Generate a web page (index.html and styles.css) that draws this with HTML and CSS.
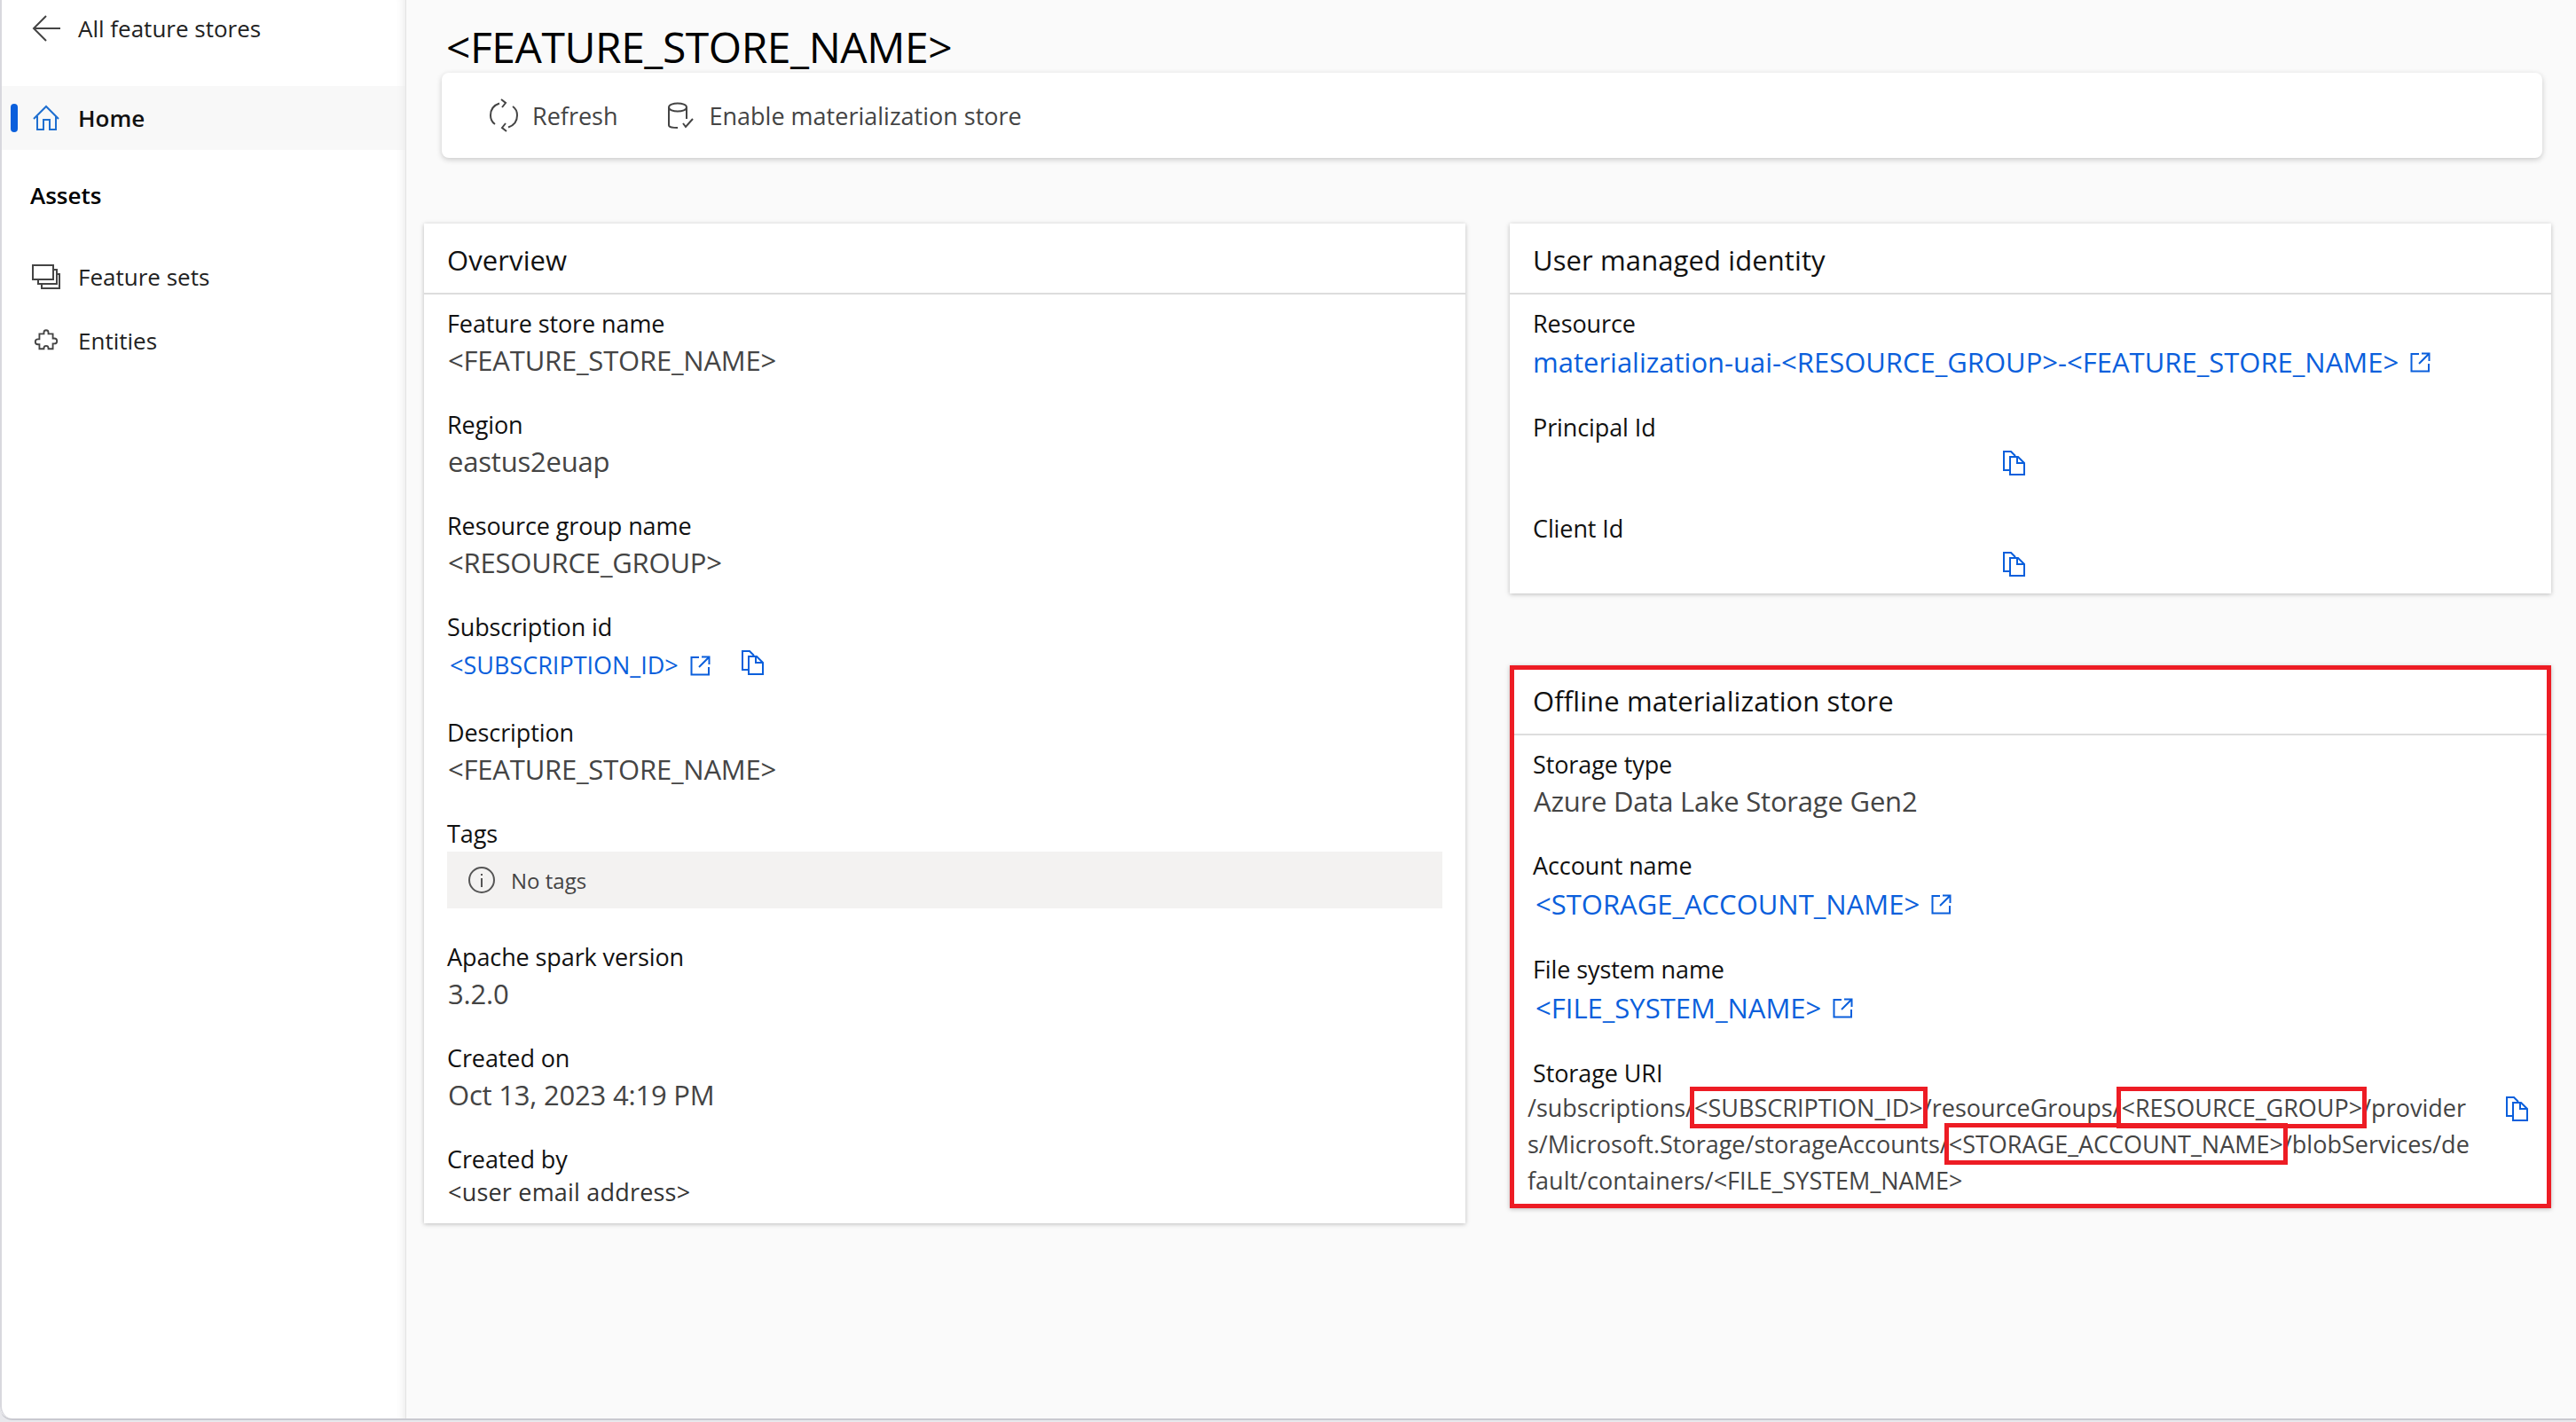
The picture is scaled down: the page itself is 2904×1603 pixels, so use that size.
FILE: index.html
```html
<!DOCTYPE html>
<html lang="en">
<head>
<meta charset="utf-8">
<title>Feature store</title>
<link rel="stylesheet" href="styles.css">
</head>
<body>
<svg class="defs" width="0" height="0" aria-hidden="true">
  <symbol id="ext" viewBox="0 0 23 23"><path d="M10 2H1.500v19.500H21V13M13 1.500h8.500V10M21 2 10 13" fill="none" stroke="currentColor" stroke-width="2"/></symbol>
  <symbol id="copy" viewBox="0 0 25 28"><path d="M7 22H1V1h8l5 5M8 7h9l7 7v13H8zM16 7v7h8" fill="none" stroke="currentColor" stroke-width="2"/></symbol>
</svg>
<div class="window">
<aside class="sidebar">
  <div class="nav-back">
    <svg class="nav-icon" viewBox="0 0 32 30"><path d="M32 15H2M16 1 2 15l14 14" fill="none" stroke="#444" stroke-width="2"/></svg>
    <span>All feature stores</span>
  </div>
  <div class="nav-item active">
    <svg class="nav-icon" viewBox="0 0 32 30"><path d="M2 16 16 2l14 14M6 13v15h7V17h7v11h7V13" fill="none" stroke="#1f6fd0" stroke-width="2"/></svg>
    <span>Home</span>
  </div>
  <div class="nav-heading">Assets</div>
  <div class="nav-item first">
    <svg class="nav-icon" viewBox="0 0 32 28"><path d="M1 1h23v16H1zM24 6h4v16H7v-5M28 11h3v16H11v-5" fill="none" stroke="#444" stroke-width="2"/></svg>
    <span>Feature sets</span>
  </div>
  <div class="nav-item">
    <svg class="nav-icon" viewBox="-3 -1 38 34"><path d="M13 5a3 3 0 0 1 6 0v2h6v6h2a3.500 3.500 0 0 1 0 7h-2v7h-6v-1a3 3 0 0 0-6 0v1H7v-6H5a3.500 3.500 0 0 1 0-7h2V7h6z" fill="none" stroke="#444" stroke-width="2.200"/></svg>
    <span>Entities</span>
  </div>
</aside>
<main class="main">
  <h1 class="title">&lt;FEATURE_STORE_NAME&gt;</h1>
  <div class="toolbar">
    <div class="tool">
      <svg class="tool-refresh" viewBox="0 0 34 38"><path d="M12 5.500C6 7.500 2 12.500 2 19c0 4 2 8 5 10M22 32.500c6-2 10-7 10-13.500 0-4-2-8-5-10M14 1l5 4-4 5M20 37l-5-4 4-5" fill="none" stroke="#444" stroke-width="2"/></svg>
      <span>Refresh</span>
    </div>
    <div class="tool">
      <svg class="tool-db" viewBox="0 0 33 30"><path d="M2 6c0-6 20-6 20 0s-20 6-20 0v20c0 3 5 3 10 3M22 6v13M18 24l3 4 8-9" fill="none" stroke="#444" stroke-width="2"/></svg>
      <span>Enable materialization store</span>
    </div>
  </div>
  <div class="columns">
    <section class="card">
      <h2 class="card-title">Overview</h2>
      <div class="card-body">
        <div class="field"><div class="label">Feature store name</div><div class="value">&lt;FEATURE_STORE_NAME&gt;</div></div>
        <div class="field"><div class="label">Region</div><div class="value">eastus2euap</div></div>
        <div class="field"><div class="label">Resource group name</div><div class="value">&lt;RESOURCE_GROUP&gt;</div></div>
        <div class="field sub"><div class="label">Subscription id</div>
          <div class="value linked"><a class="link small nudge">&lt;SUBSCRIPTION_ID&gt;</a><svg class="ext"><use href="#ext"/></svg><svg class="copy sub-copy"><use href="#copy"/></svg></div></div>
        <div class="field"><div class="label">Description</div><div class="value">&lt;FEATURE_STORE_NAME&gt;</div></div>
        <div class="field tags"><div class="label">Tags</div>
          <div class="tagbox"><svg class="info" viewBox="0 0 30 30"><circle cx="15" cy="15" r="14" fill="none" stroke="#555" stroke-width="2"/><path d="M15 8v2M15 13v10" stroke="#555" stroke-width="2"/></svg><span>No tags</span></div></div>
        <div class="field"><div class="label">Apache spark version</div><div class="value">3.2.0</div></div>
        <div class="field"><div class="label">Created on</div><div class="value">Oct 13, 2023 4:19 PM</div></div>
        <div class="field last"><div class="label">Created by</div><div class="value small-value">&lt;user email address&gt;</div></div>
      </div>
    </section>
    <div class="stack">
      <section class="card">
        <h2 class="card-title">User managed identity</h2>
        <div class="card-body">
          <div class="field link-field"><div class="label">Resource</div><div class="value linked"><a class="link">materialization-uai-&lt;RESOURCE_GROUP&gt;-&lt;FEATURE_STORE_NAME&gt;</a><svg class="ext"><use href="#ext"/></svg></div></div>
          <div class="field id-field"><div class="label">Principal Id</div><div class="id-row"><svg class="copy"><use href="#copy"/></svg></div></div>
          <div class="field id-field last"><div class="label">Client Id</div><div class="id-row"><svg class="copy"><use href="#copy"/></svg></div></div>
        </div>
      </section>
      <section class="card flagged">
        <h2 class="card-title">Offline materialization store</h2>
        <div class="card-body">
          <div class="field"><div class="label">Storage type</div><div class="value">Azure Data Lake Storage Gen2</div></div>
          <div class="field link-field"><div class="label">Account name</div><div class="value linked"><a class="link nudge">&lt;STORAGE_ACCOUNT_NAME&gt;</a><svg class="ext"><use href="#ext"/></svg></div></div>
          <div class="field link-field"><div class="label">File system name</div><div class="value linked"><a class="link nudge">&lt;FILE_SYSTEM_NAME&gt;</a><svg class="ext"><use href="#ext"/></svg></div></div>
          <div class="field last"><div class="label">Storage URI</div>
            <div class="uri-row">
              <div class="uri">/subscriptions/<span class="mark">&lt;SUBSCRIPTION_ID&gt;</span>/resourceGroups/<span class="mark">&lt;RESOURCE_GROUP&gt;</span>/provider<br>s/Microsoft.Storage/storageAccounts/<span class="mark">&lt;STORAGE_ACCOUNT_NAME&gt;</span>/blobServices/de<br>fault/containers/&lt;FILE_SYSTEM_NAME&gt;</div>
              <svg class="copy"><use href="#copy"/></svg>
            </div>
          </div>
        </div>
      </section>
    </div>
  </div>
</main>
</div>
</body>
</html>
```
FILE: styles.css
```css
* { box-sizing: border-box; }
html, body { height: 100%; }
body {
  margin: 0;
  height: 1603px;
  overflow: hidden;
  background: #e8e8ec;
  font-family: "Open Sans", "Noto Sans", sans-serif;
  color: #111;
}
.defs { position: absolute; }
.window {
  display: flex;
  height: 1601px;
  background: #fafafa;
  border-bottom: 2px solid #c9c9d0;
  border-bottom-left-radius: 14px;
  overflow: hidden;
}
.sidebar {
  width: 458px;
  flex: none;
  background: #fff;
  border-left: 2px solid #d8d8de;
  border-right: 1px solid #e4e4e4;
  border-bottom-left-radius: 14px;
  box-shadow: inset -12px 0 12px -12px rgba(0,0,0,.12);
  font-size: 26px;
}
.nav-back { height: 64px; display: flex; align-items: center; padding-left: 34px; gap: 20px; color: #222; }
.nav-icon { width: 32px; height: 30px; flex: none; }
.nav-item { height: 72px; display: flex; align-items: center; padding-left: 34px; gap: 20px; color: #222; }
.nav-item.active { margin-top: 33px; background: #f8f8f8; color: #111; font-weight: 600; position: relative; box-shadow: inset -12px 0 12px -12px rgba(0,0,0,.08); }
.nav-item.active::before { content: ""; position: absolute; left: 10px; top: 20px; width: 8px; height: 32px; border-radius: 4px; background: #0a5fdc; }
.nav-heading { margin-top: 31px; height: 40px; line-height: 40px; padding-left: 32px; font-weight: 600; color: #000; }
.nav-item.first { margin-top: 36px; }
.main { flex: 1; min-width: 0; padding: 0 26px 0 20px; }
.title {
  margin: 24px 0 0 25px;
  height: 58px;
  font-size: 48px;
  line-height: 58px;
  font-weight: 400;
  letter-spacing: -.45px;
  color: #000;
}
.toolbar {
  margin: 0 12px 0 20px;
  height: 96px;
  background: #fff;
  border-radius: 8px;
  box-shadow: 0 2px 6px rgba(0,0,0,.2);
  display: flex;
  align-items: center;
  padding-left: 53px;
  gap: 55px;
  font-size: 27px;
  font-weight: 500;
  color: #444;
}
.tool { display: flex; align-items: center; gap: 15px; }
.tool-refresh { width: 34px; height: 38px; }
.tool-db { width: 33px; height: 30px; }
.columns { margin-top: 74px; display: grid; grid-template-columns: 1174px 1174px; gap: 50px; align-items: start; }
.stack { display: flex; flex-direction: column; gap: 83px; }
.card { background: #fff; box-shadow: 0 1px 5px rgba(0,0,0,.25); }
.card.flagged { outline: 5px solid #ed1c24; outline-offset: -5px; margin-top: -2px; }
.flagged .card-title { height: 79px; }
.card-title {
  margin: 0;
  height: 80px;
  padding: 3px 26px 0;
  display: flex;
  align-items: center;
  font-size: 31px;
  font-weight: 500;
  letter-spacing: .1px;
  border-bottom: 2px solid #ddd;
  color: #111;
}
.card-body { padding: 15px 26px 0; }
.field { height: 114px; }
.field.sub { height: 119px; }
.field.tags { height: 139px; }
.field.last { height: auto; padding-bottom: 10px; }
.field.link-field { height: 117px; }
.id-field { height: 114px; }
.id-field.last { padding-bottom: 13px; }
.flagged .field.last { padding-bottom: 11px; }
.label { height: 38px; line-height: 36px; font-size: 27px; font-weight: 500; letter-spacing: -.1px; color: #111; }
.value { height: 42px; line-height: 42px; font-size: 31px; font-weight: 400; letter-spacing: -.2px; color: #444; padding-left: 1px; }
.small-value { font-size: 27px; color: #333; line-height: 34px; letter-spacing: .2px; }
.linked { display: flex; align-items: center; gap: 13px; height: 46px; letter-spacing: 0; padding-left: 0; }
.id-row { height: 40px; display: flex; align-items: center; padding-left: 530px; }
.link { color: #0a5fdc; }
.link.small { font-size: 27px; }
.nudge { margin-left: 3px; }
.ext { width: 23px; height: 23px; color: #0a5fdc; flex: none; }
.copy { width: 25px; height: 28px; color: #0a5fdc; flex: none; }
.sub-copy { margin: -6px 0 0 22px; }
.tagbox {
  height: 64px;
  background: #f3f2f1;
  display: flex;
  align-items: center;
  padding-left: 24px;
  gap: 18px;
  font-size: 24px;
  color: #444;
}
.info { width: 30px; height: 30px; }
.uri-row { display: flex; justify-content: space-between; align-items: flex-start; margin: -2px 0 0 -6px; }
.uri-row .copy { margin: 8px 0 0 0; }
.uri { font-size: 27px; line-height: 41px; letter-spacing: 0; color: #444; white-space: nowrap; }
.mark { outline: 5px solid #ed1c24; }
```
